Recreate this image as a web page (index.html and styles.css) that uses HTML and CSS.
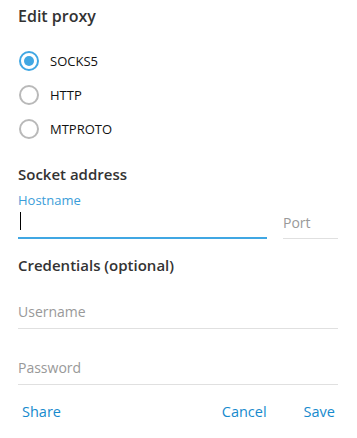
FILE: index.html
```html
<!DOCTYPE html>
<html lang="en">
<head>
  <meta charset="UTF-8" />
  <title>Edit proxy</title>
  <link rel="stylesheet" href="styles.css">
</head>
<body>
  <div class="dialog">
    <h1>Edit proxy</h1>

    <div class="radios">
      <label class="radio">
        <input type="radio" name="type" checked />
        <span class="mark"></span>
        <span class="radio-text">SOCKS5</span>
      </label>
      <label class="radio">
        <input type="radio" name="type" />
        <span class="mark"></span>
        <span class="radio-text">HTTP</span>
      </label>
      <label class="radio">
        <input type="radio" name="type" />
        <span class="mark"></span>
        <span class="radio-text">MTPROTO</span>
      </label>
    </div>

    <h2>Socket address</h2>
    <div class="address-row">
      <div class="field host">
        <div class="field-label">Hostname</div>
        <div class="input-wrap">
          <input type="text" class="input focused" />
          <!-- курсор ввода -->
          <span class="caret"></span>
        </div>
      </div>
      <div class="field port">
        <input type="text" class="input" placeholder="Port" />
      </div>
    </div>

    <h2 class="creds-title">Credentials (optional)</h2>
    <div class="field user">
      <input type="text" class="input" placeholder="Username" />
    </div>
    <div class="field pass">
      <input type="password" class="input" placeholder="Password" />
    </div>

    <div class="actions">
      <button class="link-btn">Share</button>
      <div class="spacer"></div>
      <button class="link-btn">Cancel</button>
      <button class="link-btn save">Save</button>
    </div>
  </div>
</body>
</html>
```

FILE: styles.css
```css
body {
  margin: 0;
  padding: 0;
  background-color: #fff;
  font-family: 'Open Sans', sans-serif;
  color: #222;
}

.dialog {
  padding: 5px 19px 0 18px;
}

h1 {
  margin: 0;
  font-size: 16px;
  line-height: 22px;
  font-weight: 600;
  color: #333;
}

h2 {
  margin: 18px 0 0;
  font-size: 15px;
  line-height: 20px;
  font-weight: 600;
  color: #333;
}

/* переключатели */
.radios {
  margin-top: 17px;
}

.radio {
  display: flex;
  align-items: center;
  height: 34px;
  cursor: pointer;
}

.radio input {
  display: none;
}

.mark {
  width: 20px;
  height: 20px;
  box-sizing: border-box;
  border: 2px solid #b9b9b9;
  border-radius: 50%;
  margin-left: 1px;
  display: flex;
  align-items: center;
  justify-content: center;
}

.radio input:checked + .mark {
  border-color: #40a7e3;
}

.radio input:checked + .mark::after {
  content: '';
  width: 10px;
  height: 10px;
  border-radius: 50%;
  background-color: #40a7e3;
}

.radio-text {
  margin-left: 11px;
  font-size: 13px;
  color: #111;
}

/* поля ввода */
.address-row {
  display: flex;
  align-items: flex-end;
  gap: 16px;
  margin-top: 8px;
}

.field-label {
  font-size: 13px;
  line-height: 16px;
  color: #3b9dd9;
}

.host {
  width: 249px;
}

.port {
  flex: 1;
}

.input-wrap {
  position: relative;
}

.input {
  display: block;
  width: 100%;
  height: 31px;
  box-sizing: border-box;
  border: none;
  border-bottom: 1px solid #e0e0e0;
  padding: 0 0 2px;
  font-family: 'Open Sans', sans-serif;
  font-size: 14px;
  color: #222;
  background: transparent;
  outline: none;
}

.input::placeholder {
  color: #999;
}

.input.focused {
  border-bottom: 2px solid #40a7e3;
  caret-color: transparent;
}

.caret {
  position: absolute;
  left: 2px;
  top: 4px;
  width: 1px;
  height: 18px;
  background-color: #000;
}

.creds-title {
  margin-top: 16px;
}

.user {
  margin-top: 22px;
}

.user .input,
.pass .input {
  height: 32px;
}

.pass {
  margin-top: 24px;
}

/* кнопки */
.actions {
  display: flex;
  margin-top: 17px;
}

.spacer {
  flex: 1;
}

.link-btn {
  border: none;
  background: none;
  padding: 0 4px;
  font-family: 'Open Sans', sans-serif;
  font-size: 14.5px;
  line-height: 20px;
  color: #168acd;
  cursor: pointer;
}

.save {
  margin-left: 29px;
  padding-right: 3px;
}
```
